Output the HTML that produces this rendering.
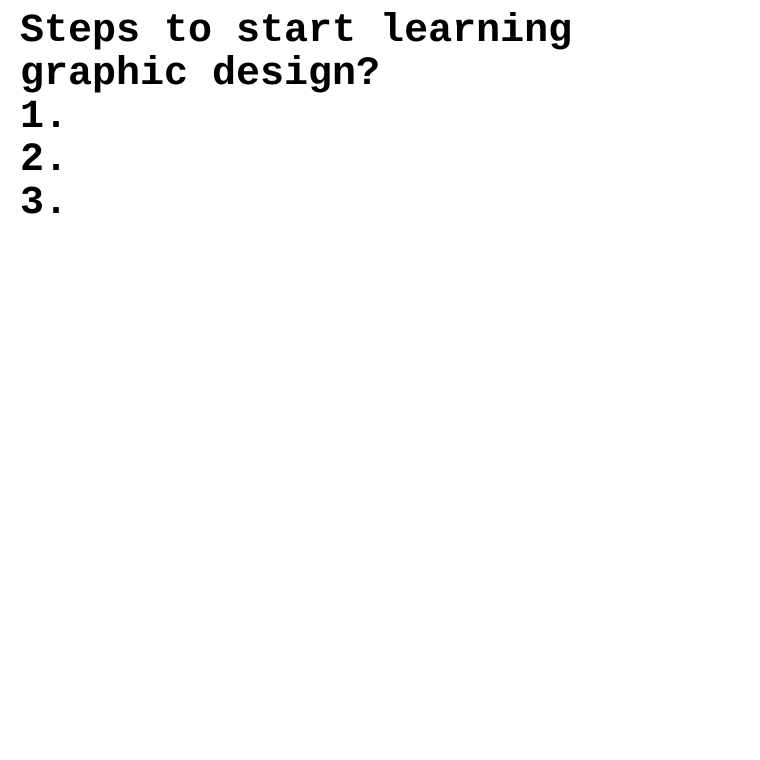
<!DOCTYPE html>
<html><head><meta charset="utf-8"><style>
html,body{margin:0;padding:0;background:#fff;width:760px;height:760px;overflow:hidden}
.t{position:absolute;left:20px;top:10px;font-family:"Courier New","Nimbus Mono PS","Courier","Liberation Mono",monospace;font-weight:bold;font-size:40px;line-height:43px;color:#000;white-space:pre}
</style></head><body>
<div class="t">Steps to start learning
graphic design?
1.
2.
3.</div>
</body></html>
